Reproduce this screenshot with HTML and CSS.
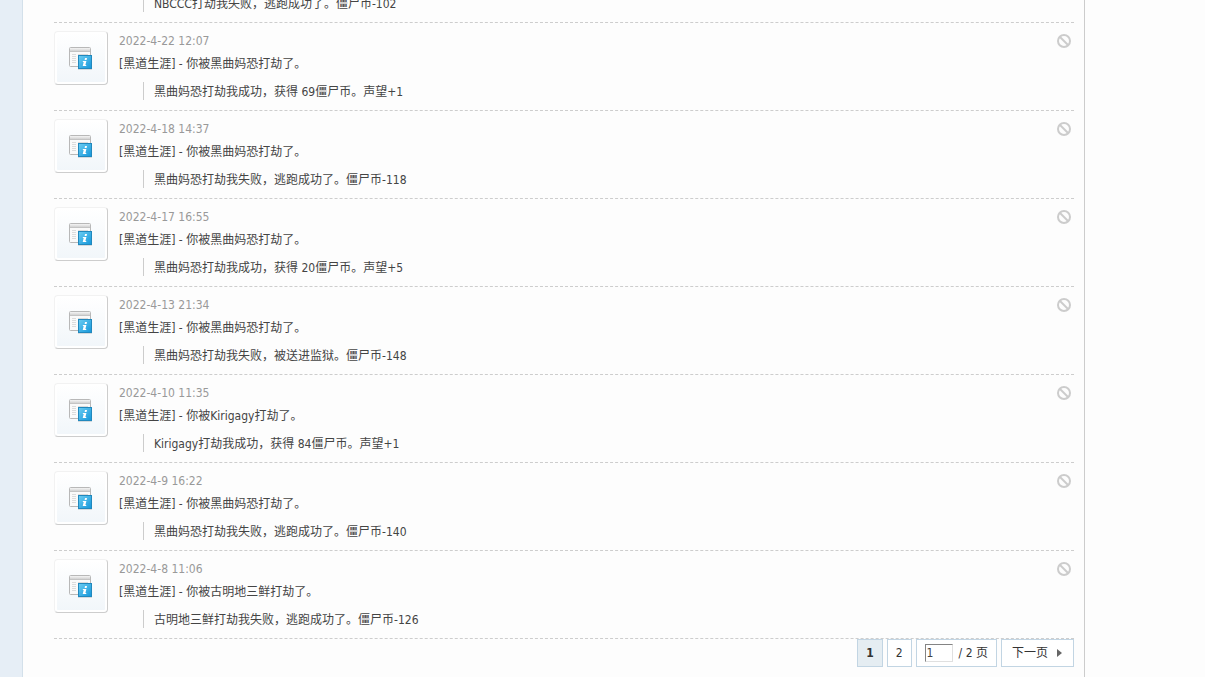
FILE: index.html
```
<!DOCTYPE html>
<html lang="zh-CN">
<head>
<meta charset="UTF-8">
<meta name="viewport" content="width=device-width, initial-scale=1">
<title>提醒</title>
<link rel="stylesheet" href="styles.css">
</head>
<body>
<svg class="defs" aria-hidden="true">
  <defs>
    <linearGradient id="bar" x1="0" y1="0" x2="0" y2="1">
      <stop offset="0" stop-color="#f4f4f4"/><stop offset="1" stop-color="#d2d2d2"/>
    </linearGradient>
    <linearGradient id="blue" x1="0" y1="0" x2="1" y2="1">
      <stop offset="0" stop-color="#6ccdf2"/><stop offset="1" stop-color="#1496da"/>
    </linearGradient>
  </defs>
  <symbol id="notice" viewBox="0 0 24 24">
    <rect x="0.5" y="0.5" width="21" height="19" rx="1" fill="#fafafa" stroke="#b8b8b8"/>
    <rect x="1" y="1" width="20" height="3" fill="url(#bar)"/>
    <path d="M1 4.5h20" stroke="#c4c4c4"/>
    <path d="M3 7.5h4M3 9.5h4M3 11.5h4M3 13.5h4M3 15.5h4M9 7.5h10" stroke="#dcdcdc"/>
    <path d="M9 22.5h14" stroke="#d5dade"/>
    <rect x="9.5" y="8.5" width="13" height="13" fill="url(#blue)" stroke="#2188bd"/>
    <path d="M16 11h2l-.4 2h-2zM14 14h3.400l-1 4h1l-.3 1h-3.400l1-4h-1z" fill="#fff"/>
  </symbol>
  <symbol id="ban" viewBox="0 0 14 14">
    <circle cx="7" cy="7" r="6" fill="none" stroke="#ccc" stroke-width="2"/>
    <path d="M3 3l8 8" stroke="#ccc" stroke-width="2"/>
  </symbol>
</svg>

<div class="wp">
  <div class="side"></div>
  <main class="mn">
    <ul class="nts">
      <li class="nt">
        <div class="bd">
          <blockquote class="quote">NBCCC打劫我失败，逃跑成功了。僵尸币-102</blockquote>
        </div>
      </li>
      <li class="nt">
        <div class="avt"><svg><use href="#notice"/></svg></div>
        <div class="bd">
          <time class="xg1">2022-4-22 12:07</time>
          <p>[黑道生涯] - 你被黑曲妈恐打劫了。</p>
          <blockquote class="quote">黑曲妈恐打劫我成功，获得 69僵尸币。声望+1</blockquote>
        </div>
        <button class="d" type="button" aria-label="屏蔽"><svg><use href="#ban"/></svg></button>
      </li>
      <li class="nt">
        <div class="avt"><svg><use href="#notice"/></svg></div>
        <div class="bd">
          <time class="xg1">2022-4-18 14:37</time>
          <p>[黑道生涯] - 你被黑曲妈恐打劫了。</p>
          <blockquote class="quote">黑曲妈恐打劫我失败，逃跑成功了。僵尸币-118</blockquote>
        </div>
        <button class="d" type="button" aria-label="屏蔽"><svg><use href="#ban"/></svg></button>
      </li>
      <li class="nt">
        <div class="avt"><svg><use href="#notice"/></svg></div>
        <div class="bd">
          <time class="xg1">2022-4-17 16:55</time>
          <p>[黑道生涯] - 你被黑曲妈恐打劫了。</p>
          <blockquote class="quote">黑曲妈恐打劫我成功，获得 20僵尸币。声望+5</blockquote>
        </div>
        <button class="d" type="button" aria-label="屏蔽"><svg><use href="#ban"/></svg></button>
      </li>
      <li class="nt">
        <div class="avt"><svg><use href="#notice"/></svg></div>
        <div class="bd">
          <time class="xg1">2022-4-13 21:34</time>
          <p>[黑道生涯] - 你被黑曲妈恐打劫了。</p>
          <blockquote class="quote">黑曲妈恐打劫我失败，被送进监狱。僵尸币-148</blockquote>
        </div>
        <button class="d" type="button" aria-label="屏蔽"><svg><use href="#ban"/></svg></button>
      </li>
      <li class="nt">
        <div class="avt"><svg><use href="#notice"/></svg></div>
        <div class="bd">
          <time class="xg1">2022-4-10 11:35</time>
          <p>[黑道生涯] - 你被Kirigagy打劫了。</p>
          <blockquote class="quote">Kirigagy打劫我成功，获得 84僵尸币。声望+1</blockquote>
        </div>
        <button class="d" type="button" aria-label="屏蔽"><svg><use href="#ban"/></svg></button>
      </li>
      <li class="nt">
        <div class="avt"><svg><use href="#notice"/></svg></div>
        <div class="bd">
          <time class="xg1">2022-4-9 16:22</time>
          <p>[黑道生涯] - 你被黑曲妈恐打劫了。</p>
          <blockquote class="quote">黑曲妈恐打劫我失败，逃跑成功了。僵尸币-140</blockquote>
        </div>
        <button class="d" type="button" aria-label="屏蔽"><svg><use href="#ban"/></svg></button>
      </li>
      <li class="nt">
        <div class="avt"><svg><use href="#notice"/></svg></div>
        <div class="bd">
          <time class="xg1">2022-4-8 11:06</time>
          <p>[黑道生涯] - 你被古明地三鲜打劫了。</p>
          <blockquote class="quote">古明地三鲜打劫我失败，逃跑成功了。僵尸币-126</blockquote>
        </div>
        <button class="d" type="button" aria-label="屏蔽"><svg><use href="#ban"/></svg></button>
      </li>
    </ul>
    <nav class="pg">
      <strong>1</strong>
      <a href="#page2">2</a>
      <label><input type="text" value="1" aria-label="页码"><span>/ 2 页</span></label>
      <a class="nxt" href="#page2">下一页</a>
    </nav>
  </main>
</div>
</body>
</html>
```

FILE: styles.css
```
* { box-sizing: border-box; }
body { margin: 0; background: #fdfdfd; color: #444; font: 12px/18px "DejaVu Sans Condensed", "Noto Sans CJK SC", sans-serif; }
ul, p, blockquote { margin: 0; padding: 0; }
a { color: #333; text-decoration: none; }
.defs { display: block; width: 0; height: 0; }

.wp { display: grid; grid-template-columns: 22px 1fr 120px; min-height: 100vh; overflow: hidden; }
.side { background: #e6eef6; }
.mn { padding: 0 10px 10px 31px; border-left: 1px solid #d3e0ea; border-right: 1px solid #ccc; }

/* notices */
.nts { margin-top: -21px; list-style: none; }
.nt { display: flex; align-items: flex-start; padding: 8px 0 10px; border-bottom: 1px dashed #cdcdcd; }
.avt { display: flex; width: 54px; height: 54px; margin-right: 11px; padding: 15px 14px; border: 1px solid; border-color: #f2f2f2 #cdcdcd #cdcdcd #f2f2f2; border-radius: 4px; background: linear-gradient(#fff, #f1f6fa); box-shadow: inset 0 0 0 2px #fff; }
.avt svg { width: 24px; height: 24px; }
.bd { flex: 1; }
.bd .xg1 { display: block; color: #999; line-height: 20px; }
.bd p { line-height: 26px; }
.quote { margin: 5px 0 0 24px; padding: 2px 0 0 10px; border-left: 1px solid #ccc; line-height: 16px; }
.nt:first-child .quote { margin: 7px 0 0 89px; }
.d { margin: 3px 3px 0 0; padding: 0; border: 0; background: none; cursor: pointer; }
.d svg { display: block; width: 14px; height: 14px; }

/* pages */
.pg { display: flex; justify-content: flex-end; gap: 4px; line-height: 26px; }
.pg strong, .pg a, .pg label { display: flex; align-items: center; height: 28px; padding: 0 8px; border: 1px solid #c2d5e3; background: #fff; color: #333; }
.pg strong { background: #e5edf2; }
.pg label { gap: 6px; }
.pg input { width: 28px; height: 18px; padding: 0 1px; border: 1px solid; border-color: #848484 #e0e0e0 #e0e0e0 #848484; font: inherit; line-height: 16px; color: #444; }
.pg .nxt { padding: 0 11px 0 10px; }
.pg .nxt::after { content: ""; margin-left: 9px; border: 4px solid transparent; border-left: 5px solid #666; border-right: 0; }
```
